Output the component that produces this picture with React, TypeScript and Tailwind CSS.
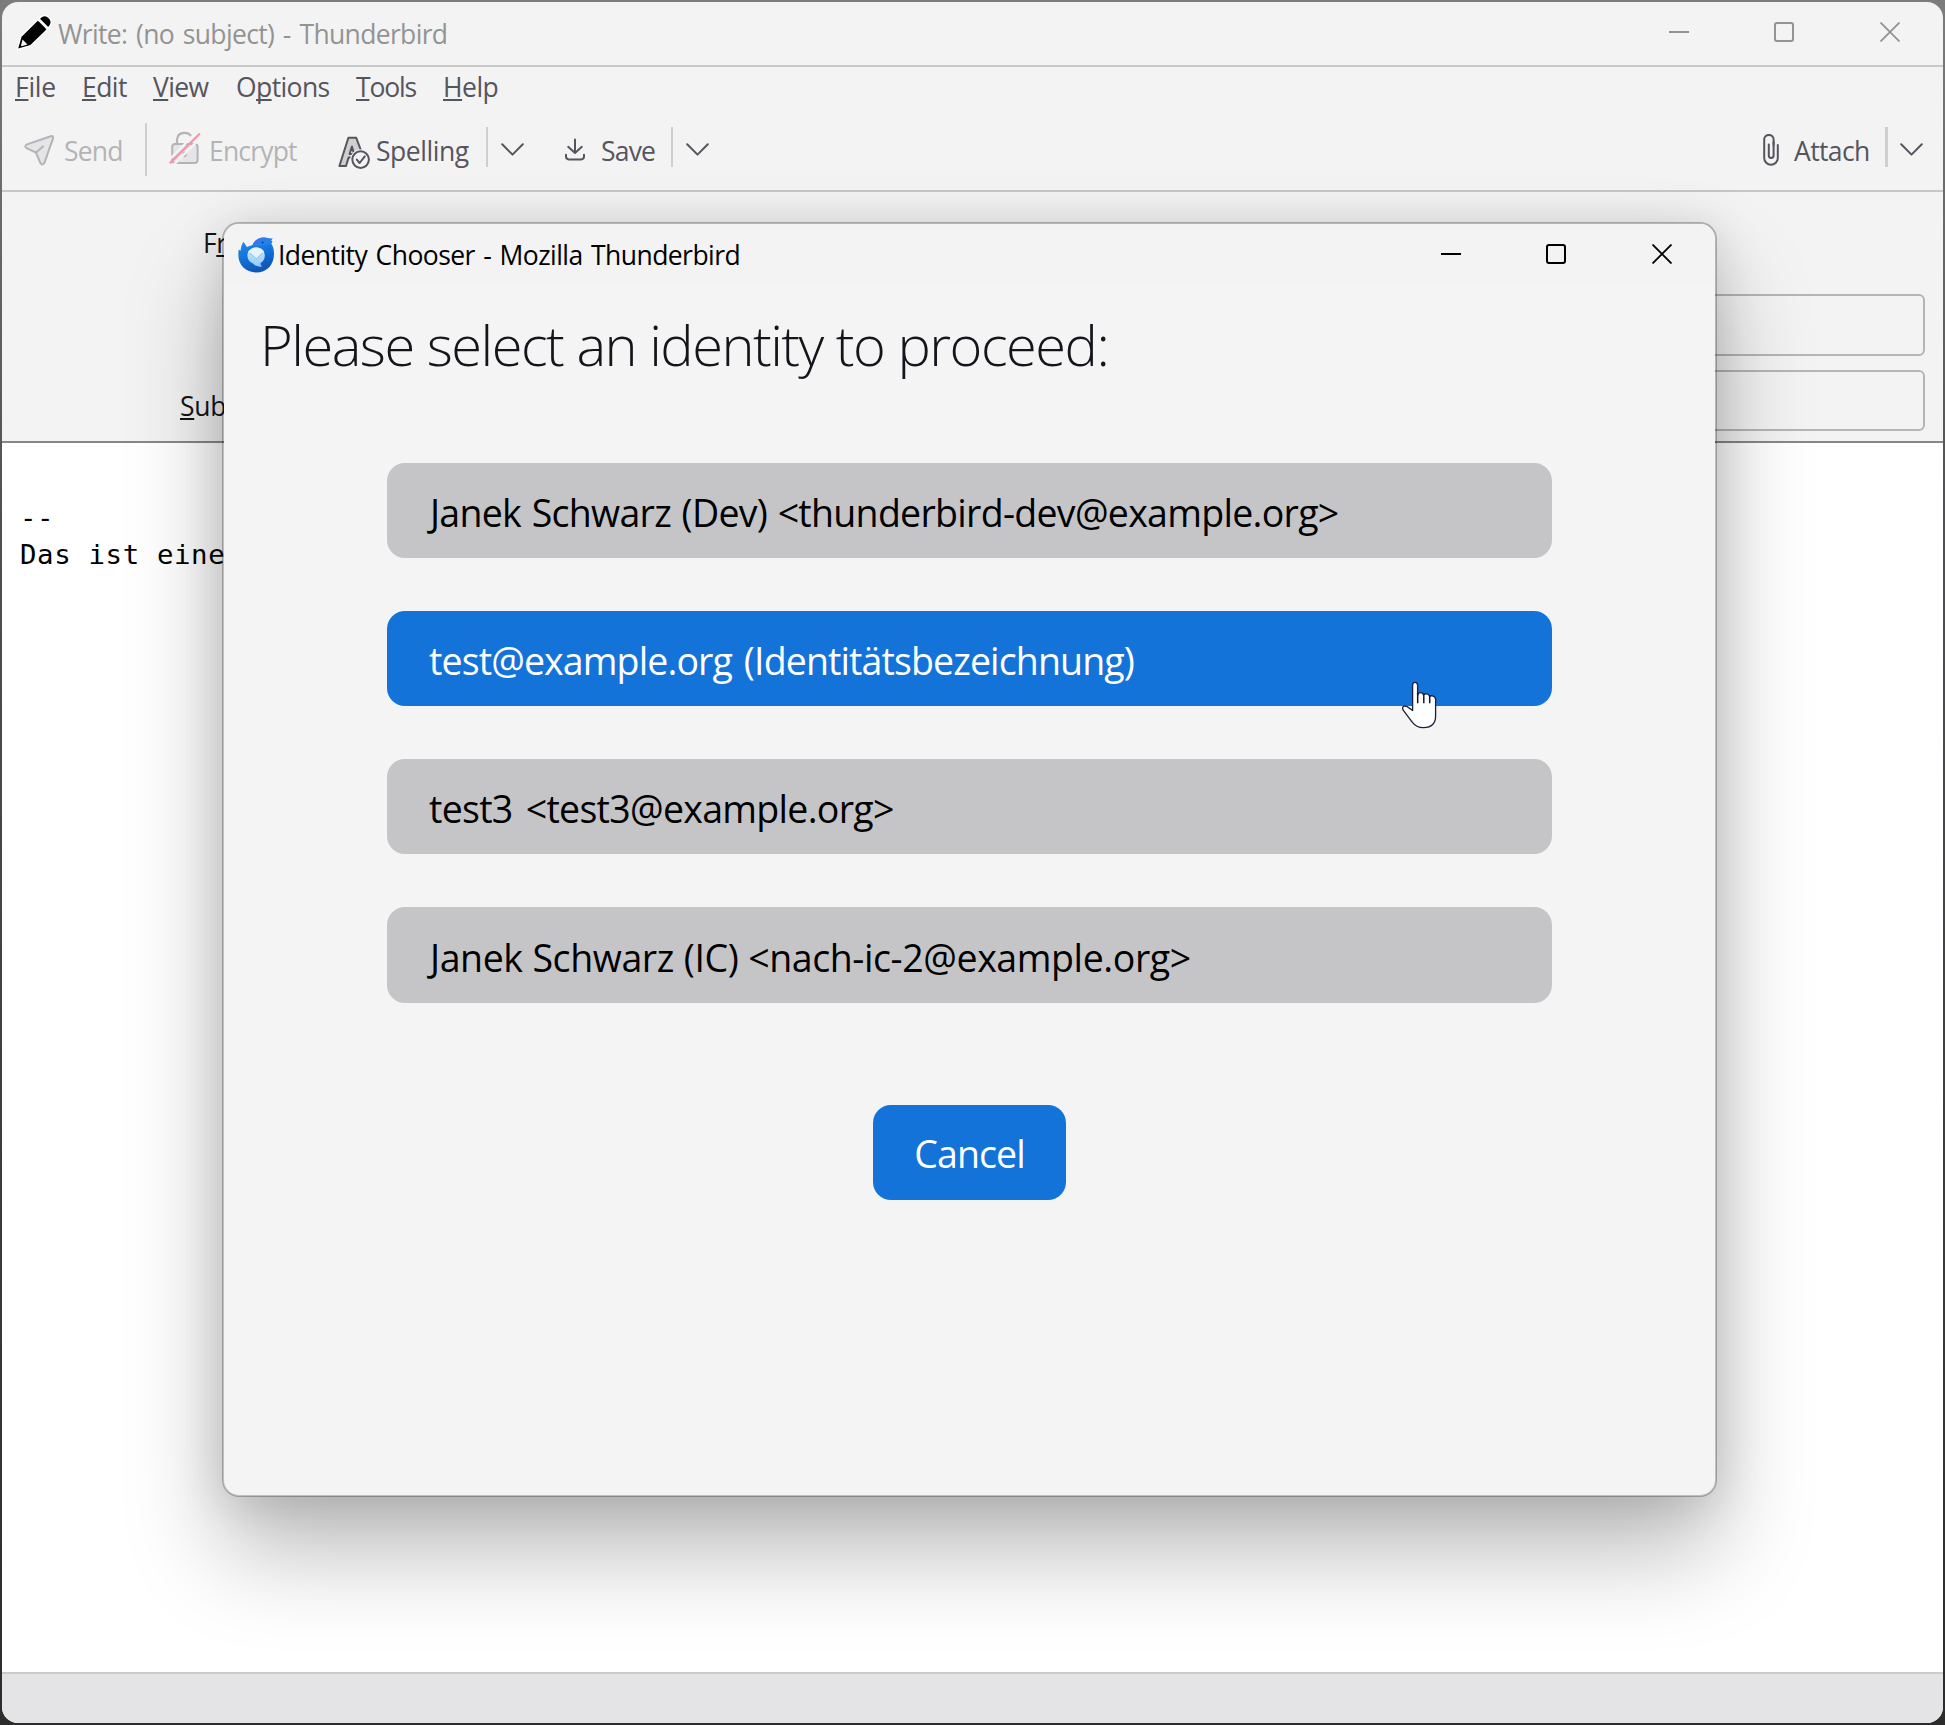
import type { ReactNode } from "react";

function PencilIcon() {
  return (
    <svg className="h-[36px] w-[36px] shrink-0" viewBox="0 0 36 36">
      <path
        d="M2 34 5.6 21.6 22.6 4.6 31.4 13.4 14.6 30.2Z M24 3.4 26.4 1.6Q29.6-.2 32.6 2.8T34.4 9.4L32.6 12 Z"
        fill="#000"
        stroke="#fff"
        strokeWidth="2.4"
        strokeLinejoin="round"
      />
      <path d="M2.2 33.6 5.6 21.8 21.8 5.8 30.4 14.4 14.4 30Z" fill="#000" />
      <path d="M24 3.8 26.2 2Q29.6.2 32.6 3.2T34 9.4L32.2 12Z" fill="#000" />
      <path d="M22.3 4.6 31.4 13.6" stroke="#f3f3f3" strokeWidth="1.6" />
      <path d="M6.6 24.6 11.4 29.6 5.6 31.2 5 30.4Z" fill="#f3f3f3" />
    </svg>
  );
}

function ThunderbirdIcon() {
  return (
    <svg className="h-[36px] w-[36px] shrink-0" viewBox="0 0 36 36">
      <defs>
        <linearGradient id="tbBody" x1="0" y1="0" x2="0.35" y2="1">
          <stop offset="0" stopColor="#2a8cf0" />
          <stop offset="0.5" stopColor="#1477de" />
          <stop offset="1" stopColor="#0d57b8" />
        </linearGradient>
        <linearGradient id="tbHead" x1="0" y1="0" x2="1" y2="0.6">
          <stop offset="0" stopColor="#6a5be0" />
          <stop offset="0.5" stopColor="#2f7de8" />
          <stop offset="1" stopColor="#1b86ea" />
        </linearGradient>
        <linearGradient id="tbMail" x1="0" y1="0" x2="0" y2="1">
          <stop offset="0" stopColor="#d3e9fd" />
          <stop offset="1" stopColor="#8cc9f8" />
        </linearGradient>
      </defs>
      <path
        d="M5.500 4.800C6.700 7 8 8.400 8.800 10L14.600 8C16.600 3 21 .6 26 .6 29 .6 31 2 34.600 1.600L33 3.600 34.400 4.600 33.200 6.600C35.200 9.600 36 13 36 17 36 28 28.400 35.600 18.400 35.600 8 35.600.4 28 .4 18.600.4 16.600.2 14.600.8 12.600L2.600 13.800C2.800 10.600 3.800 7.400 5.500 4.800Z"
        fill="url(#tbBody)"
      />
      <path d="M14.600 8C16.600 3 21 .6 26 .6 29 .6 31 2 34.600 1.600L33 3.600 34.400 4.600 33 7C27 7 25 9 21 8.600Z" fill="url(#tbHead)" />
      <path d="M18.300 10.400C23.400 10.400 26.800 14 26.800 18.400 26.800 22 25 24.600 22.600 26 22.400 28 23.600 29.400 24.600 29.800 20 30.200 16.600 28.600 15 26.600 11.600 25.200 9.400 22.400 9.400 18.600 9.400 14 13.200 10.400 18.300 10.400Z" fill="url(#tbMail)" />
      <path d="M10 15 18.400 22.400 26.200 15C24.600 12 21.800 10.400 18.400 10.400 14.800 10.400 11.600 12 10 15Z" fill="#e6f3ff" />
      <path d="M11.600 16 18.400 22 24.800 16" fill="none" stroke="#9ccaf2" strokeWidth="1.300" />
      <circle cx="24.600" cy="5.600" r="1" fill="#0b3f94" />
    </svg>
  );
}

function SendIcon() {
  return (
    <svg className="h-[32px] w-[30px] shrink-0" viewBox="0 0 30 32" fill="none" stroke="#b3b3b8" strokeWidth="2" strokeLinejoin="round" strokeLinecap="round">
      <path d="M26.800 2.200 3 10.400Q-.2 12.200 2.600 14.200L12 18.600 16.400 29.200Q18.400 32 20.400 28.800L29 4.400Q29.600 1.600 26.800 2.200Z" fill="#e5e5e8" />
      <path d="M12 18.600 19 12.400" />
    </svg>
  );
}

function EncryptIcon() {
  return (
    <svg className="h-[34px] w-[32px] shrink-0" viewBox="0 0 32 34" fill="none">
      <rect x="3.200" y="13" width="25.400" height="19" rx="3" fill="#e5e5e8" stroke="#b3b3b8" strokeWidth="2" />
      <path d="M8 12.500V9Q8.400 1.800 15.400 1.800 20.400 1.800 22 5" stroke="#b3b3b8" strokeWidth="2.200" strokeLinecap="round" />
      <path d="M15.800 20.500a2.400 2.400 0 0 1 1.600 4v1.600h-3.200v-1.600a2.400 2.400 0 0 1 1.600-4Z" fill="#b3b3b8" />
      <path d="M-.6 29.500 28 .6M4 34.500 33 5.500" stroke="#f3f3f3" strokeWidth="2.400" />
      <path d="M1.400 31.600 30.200 3.200" stroke="#ff8fa8" strokeWidth="2.200" strokeLinecap="round" />
    </svg>
  );
}

function SpellingIcon() {
  return (
    <svg className="h-[34px] w-[32px] shrink-0" viewBox="0 0 32 34" fill="none" stroke="#55555e" strokeWidth="2">
      <path
        d="M1.400 31 10.400 2.800H18.200L24 18 16 19.400 14.600 22.600H10.600L8 31Z M11.600 19H16L13.900 11.600Z"
        fill="#cfcfd2"
        fillRule="evenodd"
        strokeLinejoin="round"
      />
      <circle cx="22.600" cy="24.600" r="10.400" fill="#f3f3f3" stroke="none" />
      <circle cx="22.600" cy="24.600" r="8.300" fill="#f3f3f3" />
      <path d="M18.800 24.600 21.600 28 26.800 21.400" strokeLinecap="round" strokeLinejoin="round" />
    </svg>
  );
}

function SaveIcon() {
  return (
    <svg className="h-[23px] w-[20px] shrink-0" viewBox="0 0 20 23" fill="none" stroke="#55555e" strokeWidth="2" strokeLinecap="round" strokeLinejoin="round">
      <path d="M10 1.400V14.600M3.200 8.800 10 15 16.800 8.800" />
      <path d="M1 16.800V18.600Q1 21.400 3.800 21.400H16.200Q19 21.400 19 18.600V16.800" />
    </svg>
  );
}

function ClipIcon() {
  return (
    <svg className="h-[32px] w-[16px] shrink-0" viewBox="0 0 16 32" fill="none" stroke="#55555e" strokeWidth="2" strokeLinecap="round">
      <path d="M10.600 11V5.600A4.600 4.600 0 0 0 1.200 5.600V24A6.800 6.800 0 0 0 14.800 24V11" />
      <path d="M5.800 10.500V21.500A2.400 2.400 0 0 0 10.600 21.500V8" />
    </svg>
  );
}

function Chevron() {
  return (
    <svg className="h-[13px] w-[23px] shrink-0" viewBox="0 0 23 13" fill="none" stroke="#55555e" strokeWidth="2" strokeLinecap="round" strokeLinejoin="round">
      <path d="M1.200 1.200 11.500 11.600 21.800 1.200" />
    </svg>
  );
}

function WindowControls({ className }: { className: string }) {
  return (
    <div className={`ml-auto flex items-center ${className}`}>
      <svg className="h-[20px] w-[20px]" viewBox="0 0 20 20">
        <path d="M0 10H20" stroke="currentColor" strokeWidth="2" />
      </svg>
      <svg className="ml-[85px] h-[20px] w-[20px]" viewBox="0 0 20 20" fill="none">
        <rect x="1" y="1" width="18" height="18" rx="2" stroke="currentColor" strokeWidth="2" />
      </svg>
      <svg className="ml-[86px] h-[20px] w-[20px]" viewBox="0 0 20 20">
        <path d="M.5.5 19.500 19.500M19.500.5.5 19.500" stroke="currentColor" strokeWidth="1.800" />
      </svg>
    </div>
  );
}

function U({ children }: { children: ReactNode }) {
  return (
    <span className="underline decoration-2 underline-offset-[2px] [text-decoration-skip-ink:none]">{children}</span>
  );
}

function HandCursor() {
  return (
    <svg className="absolute left-[1402px] top-[681px] h-[48px] w-[36px]" viewBox="0 0 36 48">
      <path
        d="M10.600 29.500V4.200Q10.600 1.400 13 1.400T15.600 4.200V14.500Q16 11.600 18.600 11.600T21.400 14Q22.200 12.600 24.600 12.800T27.600 15.400Q28 14.600 30.400 14.800T33.600 18V35Q33.600 46.400 21.600 46.600 14.600 46.800 10 40.800L1.200 29.200Q-.4 26 2.200 25.200 4.800 24.800 7.600 27.400Z"
        fill="#fff"
        stroke="#1a1f3a"
        strokeWidth="1.300"
        strokeLinejoin="round"
      />
      <path d="M15.700 12V22.200M21.800 13V22.200M27.700 14V22.200" stroke="#10162e" strokeWidth="1.500" />
    </svg>
  );
}

const identities = [
  { label: "Janek Schwarz (Dev) <thunderbird-dev@example.org>", style: "pl-[43px] bg-[#c5c5c7] text-black tracking-[-0.71px] [word-spacing:1.5px]" },
  { label: "test@example.org (Identitätsbezeichnung)", style: "pl-[42px] bg-[#1373d9] text-white tracking-[-0.88px] [word-spacing:3px]" },
  { label: "test3 <test3@example.org>", style: "pl-[42px] bg-[#c5c5c7] text-black tracking-[-0.7px] [word-spacing:4px]" },
  { label: "Janek Schwarz (IC) <nach-ic-2@example.org>", style: "pl-[43px] bg-[#c5c5c7] text-black tracking-[-0.41px] [word-spacing:0.5px]" },
];

function IdentityDialog() {
  return (
    <div className="absolute left-[222px] top-[222px] flex h-[1275px] w-[1495px] flex-col rounded-[17px] border-2 border-black/25 bg-[#f4f4f4] bg-clip-padding shadow-[0_54px_96px_rgba(0,0,0,0.27),0_4px_48px_rgba(0,0,0,0.13)]">
      <div className="flex h-[62px] items-center rounded-t-[15px] bg-[#f3f3f3] pl-[14px] pr-[43px]">
        <ThunderbirdIcon />
        <span className="ml-[4px] text-[26.5px] leading-[36px] tracking-[-0.55px] [word-spacing:2px] text-black">
          Identity Chooser - Mozilla Thunderbird
        </span>
        <WindowControls className="mb-[2px] text-black" />
      </div>
      <h1 className="mt-[18px] pl-[36px] text-[56px] font-light leading-[80px] tracking-[-1.5px] text-[#15141a]">
        Please select an identity to proceed:
      </h1>
      <div className="ml-[163px] mt-[79px] flex w-[1165px] flex-col gap-[53px]">
        {identities.map((item) => (
          <div
            key={item.label}
            className={`flex h-[95px] items-center whitespace-nowrap rounded-[18px] pt-[5px] text-[37.5px] leading-[50px] last:h-[96px] ${item.style}`}
          >
            {item.label}
          </div>
        ))}
      </div>
      <button className="ml-[649px] mt-[102px] flex h-[95px] w-[193px] items-center justify-center rounded-[18px] bg-[#1373d9] pt-[3px] text-[37.5px] leading-[50px] tracking-[-0.9px] text-white">
        Cancel
      </button>
    </div>
  );
}

export default function App() {
  return (
    <div className="relative h-[1725px] w-[1945px] overflow-hidden bg-linear-to-b from-[#7c7c7c] via-[#505052] via-30% to-[#2c2c2d] p-[2px] font-['Open_Sans',sans-serif]">
      <div className="flex h-full w-full flex-col overflow-hidden rounded-[16px] bg-[#f3f3f3]">
        <div className="flex h-[65px] shrink-0 items-center border-b-2 border-[#c9c9c9] pl-[14px] pr-[43px]">
          <span className="mb-[2px]"><PencilIcon /></span>
          <span className="ml-[6px] text-[26.5px] leading-[36px] tracking-[-0.66px] [word-spacing:2.5px] text-[#939393]">
            Write: (no subject) - Thunderbird
          </span>
          <WindowControls className="mb-[3px] text-[#939393]" />
        </div>

        <div className="flex h-[37px] shrink-0 items-center pl-[13px] pt-[2px] text-[26.5px] leading-[36px] text-[#55555e]">
          <span className="w-[67px] tracking-[-0.3px]"><U>F</U>ile</span>
          <span className="w-[71px] tracking-[-0.54px]"><U>E</U>dit</span>
          <span className="w-[83px] tracking-[-0.6px]"><U>V</U>iew</span>
          <span className="w-[120px] tracking-[-0.6px]">O<U>p</U>tions</span>
          <span className="w-[87px] tracking-[-1.2px]"><U>T</U>ools</span>
          <span className="tracking-[-0.5px]"><U>H</U>elp</span>
        </div>

        <div className="flex h-[88px] shrink-0 items-center border-b-2 border-[#c6c6c6] pl-[22px] pr-[20px] pt-[5px] text-[26.5px] leading-[36px] text-[#55555e]">
          <SendIcon />
          <span className="ml-[10px] w-[81px] pt-[2px] tracking-[-0.8px] text-[#b3b3b8]">Send</span>
          <div className="h-[53px] w-[2px] bg-[#cfcfcf]" />
          <span className="mb-[3px] ml-[22px]"><EncryptIcon /></span>
          <span className="ml-[8px] w-[129px] pt-[2px] tracking-[-0.83px] text-[#b3b3b8]">Encrypt</span>
          <span className="mt-[4px]"><SpellingIcon /></span>
          <span className="ml-[6px] w-[110px] pt-[2px] tracking-[-0.45px]">Spelling</span>
          <div className="mb-[5px] mr-[13px] h-[40px] w-[2px] bg-[#cfcfcf]" />
          <Chevron />
          <span className="ml-[41px]"><SaveIcon /></span>
          <span className="ml-[16px] w-[70px] pt-[2px] tracking-[-0.8px]">Save</span>
          <div className="mb-[5px] mr-[13px] h-[40px] w-[2px] bg-[#cfcfcf]" />
          <Chevron />
          <span className="ml-auto"><ClipIcon /></span>
          <span className="ml-[15px] w-[91px] pt-[2px] tracking-[-0.61px]">Attach</span>
          <div className="mb-[5px] mr-[12px] h-[40px] w-[3px] bg-[#cfcfcf]" />
          <Chevron />
        </div>

        <div className="flex h-[251px] shrink-0 flex-col border-b-2 border-[#878787] pr-[18px] text-[26.5px] leading-[36px] text-[#15141a]">
          <div className="mt-[33px] flex h-[35px] pl-[201px] tracking-[-0.4px]"><span>F<U>r</U>om</span></div>
          <div className="ml-[277px] mt-[34px] h-[62px] rounded-[6px] border-2 border-[#b5b5b5]" />
          <div className="mt-[14px] flex h-[61px]">
            <span className="ml-[178px] w-[99px] shrink-0 pt-[18px] tracking-[-0.3px]"><U>S</U>ubject</span>
            <div className="h-[61px] grow rounded-[6px] border-2 border-[#b5b5b5]" />
          </div>
        </div>

        <div className="flex-1 bg-white pl-[18px] pt-[56px] font-['DejaVu_Sans_Mono',monospace] text-[27.4px] leading-[37px] tracking-[0.62px] text-black">
          <p>--</p>
          <p>Das ist eine</p>
        </div>

        <div className="h-[51px] shrink-0 border-t-2 border-[#cbcbcc] bg-[#e4e4e6]" />
      </div>

      <IdentityDialog />
      <HandCursor />
    </div>
  );
}
